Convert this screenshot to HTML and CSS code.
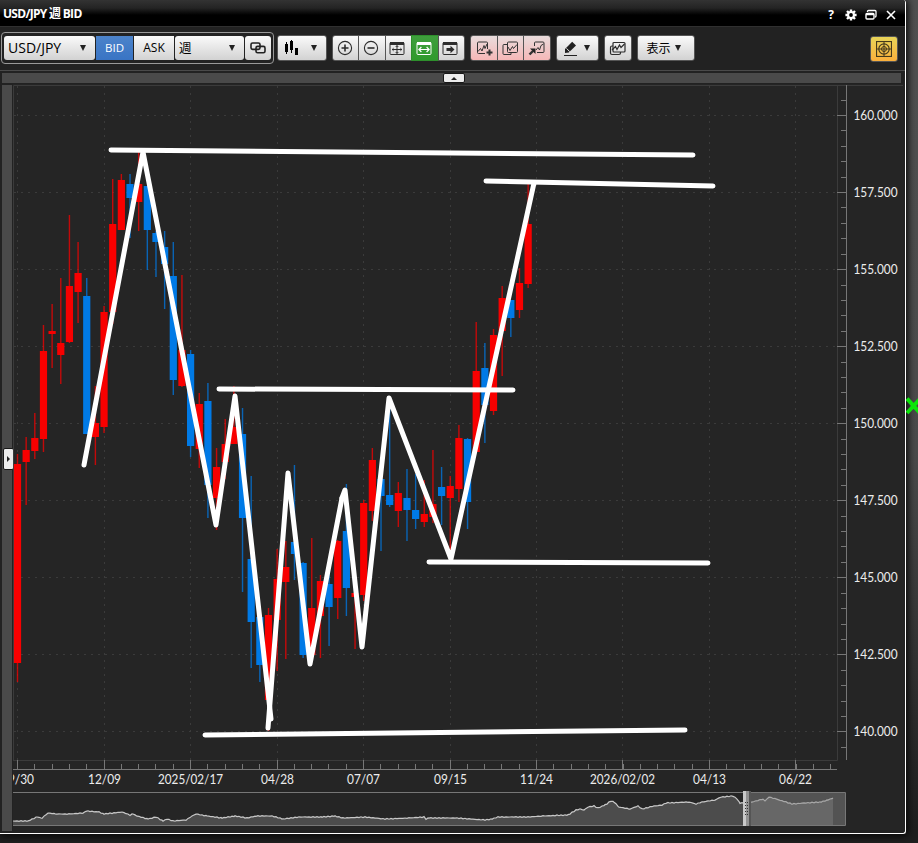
FILE: index.html
```
<!DOCTYPE html>
<html lang="ja">
<head>
  <meta charset="UTF-8" />
  <meta name="viewport" content="width=device-width, initial-scale=1" />
  <title>USD/JPY 週 BID</title>
  <link rel="stylesheet" href="styles.css">
</head>
<body>
  <div class="window">
    <header class="titlebar">
      <h1>USD/JPY 週 BID</h1>
      <div class="window-buttons">
        <span class="help">?</span>
        <svg width="12" height="12" viewBox="0 0 12 12"><g stroke="#fff" stroke-width="2.4"><path d="M6 0.4V11.6M0.4 6H11.6M2 2L10 10M10 2L2 10"/></g><circle cx="6" cy="6" r="3.9" fill="#fff"/><circle cx="6" cy="6" r="1.9" fill="#000"/></svg>
        <svg width="12" height="12" viewBox="0 0 12 12" fill="none" stroke="#fff"><path d="M2.5 3V2.2Q2.5 1.5 3.5 1.5H10Q11 1.5 11 2.5V7Q11 8 10 8" stroke-width="1.3"/><rect x="1" y="4.5" width="8" height="5.5" rx="1" stroke-width="1.4"/><path d="M1 5.3H9" stroke-width="2"/></svg>
        <svg width="10" height="10" viewBox="0 0 10 10"><path d="M1 1L9 9M9 1L1 9" stroke="#fff" stroke-width="1.6"/></svg>
      </div>
    </header>

    <nav class="toolbar">
      <div class="symbol-group">
        <button class="btn pair">USD/JPY<i class="arrow"></i></button>
        <button class="btn bid">BID</button>
        <button class="btn ask">ASK</button>
        <button class="btn period">週<i class="arrow"></i></button>
        <button class="btn link">
          <svg width="16" height="12" viewBox="0 0 16 12" fill="none" stroke="#222" stroke-width="1.6"><rect x="1" y="1" width="9" height="6.4" rx="1.6"/><rect x="6" y="4.4" width="9" height="6.4" rx="1.6"/></svg>
        </button>
      </div>

      <button class="btn chart-type">
        <svg width="14" height="16" viewBox="0 0 14 16" fill="#000"><path d="M1 4h3v8H1zM2 2h1v12H2zM6 1h3v9H6zM7 0h1v13H7zM11 8h3v7h-3z"/></svg>
        <i class="arrow"></i>
      </button>

      <div class="group zoom-group">
        <button class="btn"><svg width="16" height="16" viewBox="0 0 16 16" fill="none" stroke="#2d2d2d"><circle cx="8" cy="8" r="6.6" stroke-width="1.1"/><path d="M8 4.5V11.5M4.5 8H11.5" stroke-width="1.6"/></svg></button>
        <button class="btn"><svg width="16" height="16" viewBox="0 0 16 16" fill="none" stroke="#2d2d2d"><circle cx="8" cy="8" r="6.6" stroke-width="1.1"/><path d="M4.5 8H11.5" stroke-width="1.6"/></svg></button>
        <button class="btn"><svg width="16" height="16" viewBox="0 0 16 16" fill="none" stroke="#2d2d2d"><rect x="1" y="2.5" width="14" height="12" rx="1"/><path d="M1 3.5H15" stroke-width="3"/><path d="M8 5.5V13.5M3 9.5H13M6.7 7L8 5.6L9.3 7M6.7 12L8 13.4L9.3 12M4.6 8.2L3.2 9.5L4.6 10.8M11.4 8.2L12.8 9.5L11.4 10.8"/></svg></button>
        <button class="btn active"><svg width="16" height="16" viewBox="0 0 16 16" fill="none" stroke="#fff"><rect x="1" y="2.5" width="14" height="12" rx="1"/><path d="M1 3.5H15" stroke-width="3"/><path d="M3 9.5H13M5.4 7L2.9 9.5L5.4 12M10.6 7L13.1 9.5L10.6 12" stroke-width="1.2"/></svg></button>
        <button class="btn"><svg width="16" height="16" viewBox="0 0 16 16" fill="none" stroke="#2d2d2d"><rect x="1" y="2.5" width="14" height="12" rx="1"/><path d="M1 3.5H15" stroke-width="3"/><path d="M4.5 8H8.5V5.8L12.5 9.5L8.5 13.2V11H4.5Z" fill="#2d2d2d" stroke="none"/></svg></button>
      </div>

      <div class="group pink-group">
        <button class="btn"><svg width="18" height="16" viewBox="0 0 18 16" fill="none" stroke="#333"><path d="M12.5 9V3Q12.5 2 11.5 2H3.5Q2.5 2 2.5 3V12.5Q2.5 13.5 3.5 13.5H10"/><path d="M3 11.5L5.5 8.5L7 11L9 5.5L10 8.5L12 4"/><path d="M14.5 9.5V15.5M11.5 12.5H17.5" stroke-width="2"/></svg></button>
        <button class="btn"><svg width="18" height="16" viewBox="0 0 18 16" fill="none" stroke="#333"><path d="M6 4.5H3Q2 4.5 2 5.5V13.5Q2 14.5 3 14.5H10V12.5"/><rect x="6.5" y="2" width="10" height="10.5" rx="1"/><path d="M7 7L9 10.5L11.5 6.5L12.5 8.5L16 4.5"/></svg></button>
        <button class="btn"><svg width="18" height="16" viewBox="0 0 18 16" fill="none" stroke="#333"><path d="M6.5 6V3Q6.5 2 7.5 2H15Q16 2 16 3V11.5Q16 12.5 15 12.5H9"/><path d="M8 10L10 7.5L11.5 10L13 5.5L15.5 4"/><path d="M1.5 14.5L5 11" stroke-width="2.4"/><path d="M2 8.5H7.5V14Z" fill="#222" stroke="none"/></svg></button>
      </div>

      <button class="btn pen">
        <svg width="16" height="16" viewBox="0 0 16 16"><path d="M2 9L9.2 1.8L13 5.4L5.8 12.5L2 13Z" fill="#222"/><path d="M3.5 8.4L6.8 11.7" stroke="#e6e6e6"/><path d="M1 15.5H14" stroke="#222"/></svg>
        <i class="arrow"></i>
      </button>
      <button class="btn copy"><svg width="17" height="16" viewBox="0 0 17 16" fill="none" stroke="#2d2d2d" stroke-width="1.2"><path d="M4 6H3Q1.5 6 1.5 7.5V13Q1.5 14.5 3 14.5H10Q11.5 14.5 11.5 13V12"/><rect x="4" y="2.5" width="12" height="9.5" rx="1"/><path d="M3 10L6.5 6.5L8 9.5L10.5 5L12 7.5L15.5 4"/></svg></button>
      <button class="btn display">表示<i class="arrow"></i></button>
      <button class="btn target"><svg width="16" height="16" viewBox="0 0 16 16" fill="none" stroke="#44391c"><rect x="0.5" y="0.5" width="15" height="15" stroke-width="1.2"/><circle cx="8" cy="8" r="5.2" stroke-width="1.2"/><circle cx="8" cy="8" r="2.5"/><path d="M8 0V16M0 8H16"/></svg></button>
    </nav>

    <div class="fold-top"><button class="fold-btn"><i></i></button></div>

    <main class="content">
      <aside class="fold-left"><button class="fold-btn side"><i></i></button></aside>
      <svg class="chart" id="chart" width="891" height="746" viewBox="13 84 891 746">
        <g id="grid"></g>
        <g id="axes"></g>
        <g id="candles"></g>
        <g id="labels"></g>
        <g id="overview"></g>
        <g class="drawing">
          <path d="M111 150L693 155"/>
          <path d="M486 181L713 186"/>
          <path d="M219 389L513 390"/>
          <path d="M429 562L708 563"/>
          <path d="M205 735L685 730"/>
          <path d="M84 465L143 152L216 525L235 396L271 719"/>
          <path d="M268 728L288 473L310 664L342 498"/>
          <path d="M342 498L345 490L362 647L389 398L451 559L534 183"/>
        </g>
      </svg>
    </main>
  </div>
  <svg class="desktop-mark" width="12" height="18" viewBox="0 0 12 18"><path d="M1 1.5L14 16M1 16L14 2" stroke="#0be60b" stroke-width="4"/></svg>

  <script src="chart.js"></script>
</body>
</html>
```
FILE: styles.css
```
* {
  box-sizing: border-box;
}

body {
  margin: 0;
  width: 918px;
  height: 843px;
  overflow: hidden;
  position: relative;
  font-family: "Open Sans", "Noto Sans CJK JP", sans-serif;
  background: linear-gradient(#505050 0, #4a4a4a 450px, #1e1e1e 830px);
}

/* Window */
.window {
  width: 906px;
  height: 834px;
  display: flex;
  flex-direction: column;
  background: #222;
  border-right: 1px solid #fff;
  border-bottom: 1px solid #fff;
  border-radius: 0 3px 3px 0;
  box-shadow: 1px 1px 7px 1px #080808;
  overflow: hidden;
}

.titlebar {
  flex: none;
  height: 27px;
  display: flex;
  align-items: center;
  justify-content: space-between;
  padding: 0 9px 0 3px;
  background: linear-gradient(#333, #242424 8px, #000 15px);
  border-bottom: 1px solid #303030;
}

.titlebar h1 {
  margin: 0;
  font-size: 12px;
  font-weight: 700;
  letter-spacing: -0.7px;
  color: #fff;
}

.window-buttons {
  display: flex;
  align-items: center;
  gap: 8.6px;
  padding-top: 3px;
}

.help {
  width: 10px;
  color: #fff;
  font-size: 12px;
  font-weight: 700;
  line-height: 12px;
  text-align: center;
}

/* Toolbar */
.toolbar {
  flex: none;
  height: 44px;
  display: flex;
  align-items: center;
  padding: 0 7px 2px 1px;
  border-bottom: 1px solid #4a4a4a;
}

.symbol-group {
  display: flex;
  gap: 1px;
  height: 32px;
  width: 273px;
  margin-right: 3px;
  padding: 3px 2px;
  border: 1px solid #999;
  border-radius: 4px;
}

.btn {
  display: flex;
  align-items: center;
  justify-content: center;
  height: 26px;
  margin: 0;
  padding: 0;
  border: 1px solid #555;
  border-radius: 3px;
  background: linear-gradient(#fafafa, #d2d2d2);
  color: #000;
  font-family: inherit;
  font-size: 12px;
}

.symbol-group .btn {
  height: 24px;
  border: 0;
}

.symbol-group .btn.pair {
  width: 91px;
  justify-content: space-between;
  padding: 0 9px 0 4px;
  font-size: 14px;
}

.symbol-group .btn.bid {
  width: 37px;
  border-radius: 0;
  background: linear-gradient(#4c83ca, #3974c4);
  color: #fff;
  font-size: 11.5px;
}

.symbol-group .btn.ask {
  width: 40px;
  border-radius: 0;
  font-size: 12px;
}

.symbol-group .btn.period {
  width: 69px;
  justify-content: space-between;
  padding: 0 9px 0 4px;
  font-size: 12.5px;
}

.symbol-group .btn.link {
  width: 26px;
}

.arrow {
  width: 0;
  height: 0;
  border: 3.5px solid transparent;
  border-top: 6px solid #222;
  border-bottom: 0;
}

.chart-type {
  width: 50px;
  gap: 13px;
  padding-right: 3px;
  margin-right: 5px;
}

.group {
  display: flex;
}

.group .btn {
  width: 27px;
  margin-right: -1px;
  border-radius: 0;
}

.group .btn:first-child {
  border-radius: 3px 0 0 3px;
}

.group .btn:last-child {
  border-radius: 0 3px 3px 0;
}

.zoom-group {
  width: 133px;
  margin-right: 5px;
}

.zoom-group .btn {
  width: 27.4px;
  padding-right: 2px;
}

.zoom-group .btn.active {
  background: linear-gradient(#3f9e3d, #2f9a2c);
  border-color: #2e8f2c;
}

.pink-group {
  width: 81px;
  margin-right: 5px;
}

.pink-group .btn {
  width: 27.6px;
  background: linear-gradient(#e9dcdc, #f6b7b7);
}

.pen {
  width: 43px;
  gap: 5px;
  padding-right: 3px;
  margin-right: 5px;
}

.copy {
  width: 28px;
  padding-right: 2px;
  margin-right: 5px;
}

.display {
  width: 58px;
  gap: 4px;
  padding-right: 5px;
}

.target {
  width: 28px;
  margin-left: auto;
  margin-top: 2px;
  background: linear-gradient(#e8d458, #fbb03c);
}

.btn svg {
  flex: none;
}

/* Fold bars */
.fold-top {
  flex: none;
  height: 10px;
  margin: 2px 4px 0 2px;
  padding-left: 4px;
  display: flex;
  justify-content: center;
  background: #4a4a4a;
}

.fold-btn {
  width: 22px;
  height: 10px;
  padding: 0;
  display: flex;
  align-items: center;
  justify-content: center;
  border: 1px solid #181818;
  border-radius: 2px;
  background: #ececec;
}

.fold-btn i {
  border: 3px solid transparent;
  border-bottom-color: #222;
  border-top: 0;
}

.content {
  display: flex;
  margin-top: 1px;
}

.fold-left {
  width: 10px;
  height: 746px;
  margin: 1px 1px 0 2px;
  padding-top: 2px;
  display: flex;
  align-items: center;
  background: #4a4a4a;
}

.fold-btn.side {
  flex: none;
  width: 11px;
  height: 22px;
  margin-left: 1px;
}

.fold-btn.side i {
  border: 3px solid transparent;
  border-left-color: #222;
  border-right: 0;
}

/* Chart */
.chart {
  display: block;
  background: #252525;
}

.chart text {
  font-family: Lato, sans-serif;
  font-size: 13px;
  fill: #ececec;
}

.grid-line {
  stroke: #3b3b3b;
  stroke-dasharray: 2 5;
}

.frame {
  fill: none;
  stroke: #3b3b3b;
}

.axis {
  fill: none;
  stroke: #777;
}

.up {
  fill: #f80000;
}

.down {
  fill: #007ae6;
}

.wick {
  opacity: 0.75;
}

.drawing path {
  fill: none;
  stroke: #fff;
  stroke-width: 5;
  stroke-linecap: round;
  stroke-linejoin: round;
}

.overview-area {
  fill: #4c4c4c;
}

.overview-line {
  fill: none;
  stroke: #c8c8c8;
  stroke-width: 1.2;
}

.desktop-mark {
  position: absolute;
  left: 906px;
  top: 397px;
}
```
FILE: chart.js
```
const NS = 'http://www.w3.org/2000/svg';

// [direction, body top, body bottom, high, low]
const candles = [
  ['up', 464, 663, 454, 682], ['up', 450, 462, 437, 505], ['up', 438, 451, 413, 459],
  ['up', 351, 439, 325, 452], ['up', 331, 334, 304, 368], ['up', 343, 355, 278, 384],
  ['up', 286, 342, 215, 343], ['up', 273, 292, 242, 323], ['down', 296, 434, 278, 434],
  ['up', 423, 437, 386, 465], ['up', 312, 427, 306, 433], ['up', 224, 312, 179, 324],
  ['up', 180, 230, 174, 230], ['down', 184, 198, 174, 238], ['up', 184, 202, 152, 231],
  ['down', 186, 230, 186, 270], ['down', 233, 242, 231, 277], ['down', 247, 264, 231, 309],
  ['down', 276, 380, 242, 395], ['up', 350, 386, 275, 387], ['down', 354, 446, 350, 457],
  ['up', 404, 449, 393, 468], ['down', 401, 485, 383, 518], ['up', 467, 498, 448, 530],
  ['up', 444, 462, 419, 479], ['up', 427, 444, 386, 444], ['down', 434, 518, 408, 592],
  ['down', 559, 622, 476, 668], ['down', 617, 665, 617, 682], ['up', 615, 700, 608, 731],
  ['up', 579, 620, 549, 671], ['up', 567, 582, 541, 659], ['down', 542, 554, 465, 580],
  ['down', 563, 655, 562, 658], ['up', 608, 655, 538, 656], ['up', 581, 616, 575, 658],
  ['down', 584, 607, 560, 646], ['up', 541, 598, 540, 619], ['down', 531, 588, 484, 616],
  ['up', 593, 597, 593, 649], ['up', 503, 595, 500, 601], ['up', 460, 511, 448, 521],
  ['down', 479, 496, 479, 551], ['down', 495, 505, 405, 507], ['up', 493, 511, 482, 527],
  ['down', 498, 510, 469, 541], ['down', 510, 519, 474, 529], ['up', 514, 522, 480, 527],
  ['up', 504, 517, 450, 523], ['down', 487, 496, 467, 525], ['up', 486, 498, 476, 555],
  ['up', 438, 489, 425, 502], ['down', 439, 502, 438, 529], ['up', 371, 452, 322, 452],
  ['down', 368, 405, 343, 443], ['up', 335, 411, 329, 415], ['up', 298, 331, 286, 376],
  ['down', 300, 318, 300, 337], ['up', 283, 310, 268, 318], ['up', 224, 284, 184, 288]
];

// [x, label, label width]
const dates = [
  [17.5, '09/30', 33], [104.5, '12/09', 33], [190.5, '2025/02/17', 65], [277.5, '04/28', 33],
  [363.5, '07/07', 33], [450.5, '09/15', 33], [536.5, '11/24', 33], [622.5, '2026/02/02', 65],
  [709.5, '04/13', 33], [795.5, '06/22', 33]
];

const history = [
  [13, 821], [28, 821], [37, 817], [42, 818], [48, 813], [57, 814], [70, 814], [83, 813],
  [86, 811], [99, 812], [104, 814], [122, 812], [130, 815], [133, 814], [137, 816], [148, 819],
  [156, 817], [163, 821], [167, 819], [173, 821], [186, 820], [192, 816], [196, 814], [207, 816],
  [222, 818], [235, 816], [247, 818], [256, 816], [272, 816], [283, 819], [299, 817], [322, 817],
  [335, 816], [343, 818], [365, 817], [385, 819], [410, 818], [424, 817], [426, 819], [429, 818],
  [455, 818], [485, 820], [492, 819], [498, 817], [530, 817], [541, 816], [568, 815], [576, 810],
  [580, 809], [584, 810], [588, 807], [594, 806], [598, 808], [605, 805], [611, 801], [614, 802],
  [619, 807], [630, 809], [638, 806], [642, 809], [654, 806], [662, 805], [666, 803], [689, 802],
  [696, 804], [702, 802], [715, 800], [721, 797], [733, 796], [737, 799], [740, 803], [746, 803],
  [752, 802], [763, 799], [765, 801], [769, 797], [776, 799], [786, 802], [792, 804], [804, 803],
  [821, 802], [828, 800], [833, 798]
];

function add(parent, tag, attrs, text) {
  const el = document.createElementNS(NS, tag);
  for (const key in attrs) el.setAttribute(key, attrs[key]);
  if (text) el.textContent = text;
  document.getElementById(parent).appendChild(el);
  return el;
}

// price axis and grid
add('axes', 'path', { class: 'frame', d: 'M13.5 760V85.5H903M837.5 85V760.5H13' });
add('axes', 'path', { class: 'axis', d: 'M846.5 85V760M13 769.5H837' });
for (let i = 0; i < 9; i++) {
  const y = Math.round(115 + i * 77.05) + 0.5;
  add('grid', 'path', { class: 'grid-line', d: `M14 ${y}H837` });
  add('axes', 'path', { class: 'axis', d: `M837 ${y}H846` });
  add('labels', 'text', { x: 853.5, y: y + 4, textLength: 44, lengthAdjust: 'spacingAndGlyphs' }, (160 - i * 2.5).toFixed(3));
}
for (let i = -1; i < 42; i++) {
  const y = Math.round(115 + i * 15.41) + 0.5;
  add('axes', 'path', { class: 'axis', d: `M841 ${y}H846` });
}

// date axis
dates.forEach(([x, label, width]) => {
  add('grid', 'path', { class: 'grid-line', d: `M${x} 86V760` });
  add('axes', 'path', { class: 'axis', d: `M${x} 760V769` });
  add('labels', 'text', { x: x, y: 784, 'text-anchor': 'middle', textLength: width, lengthAdjust: 'spacingAndGlyphs' }, label);
});
for (let i = 0; i < 48; i++) {
  const x = Math.round(17 + i * 17.3) + 0.5;
  add('axes', 'path', { class: 'axis', d: `M${x} 764V769` });
}

candles.forEach(([dir, top, bottom, high, low], i) => {
  const x = 17.5 + i * 8.655;
  add('candles', 'rect', { class: dir + ' wick', x: x - 0.7, y: high, width: 1.4, height: low - high });
  add('candles', 'rect', { class: dir, x: x - 3.6, y: top, width: 7.2, height: bottom - top });
});

// overview strip, with a small ripple between the stored points
const points = [];
for (let i = 0; i < history.length - 1; i++) {
  const [x1, y1] = history[i];
  const [x2, y2] = history[i + 1];
  for (let x = x1; x < x2; x += 2) {
    const y = y1 + (y2 - y1) * (x - x1) / (x2 - x1);
    points.push(x + ' ' + (y + Math.sin(x * 1.7) * 0.4).toFixed(1));
  }
}
points.push('833 798');
const line = 'M' + points.join('L');
add('overview', 'path', { class: 'overview-area', d: line + 'V825H13Z' });
add('overview', 'path', { class: 'overview-line', d: line });
add('overview', 'rect', { x: 750, y: 793, width: 96, height: 32, fill: '#858585', 'fill-opacity': 0.48 });
add('overview', 'path', { class: 'axis', d: 'M13 792.5H845.5V825.5H13' });

// range handle
add('overview', 'rect', { x: 743, y: 791, width: 3, height: 35, fill: '#c9c9c9' });
add('overview', 'rect', { x: 746, y: 791, width: 3, height: 35, fill: '#929292' });
add('overview', 'rect', { x: 749, y: 791, width: 2, height: 35, fill: '#555' });
for (let y = 802.5; y < 816; y += 3) {
  add('overview', 'path', { d: `M745 ${y}H749`, stroke: '#333', 'stroke-dasharray': '1 1' });
}
```
